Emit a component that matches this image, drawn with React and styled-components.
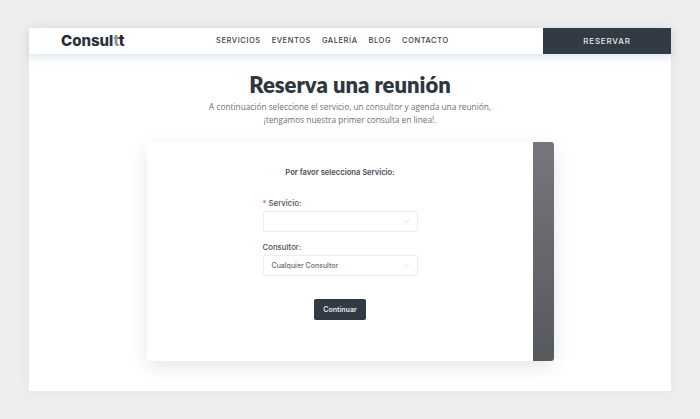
import React from "react";
import styled, { createGlobalStyle } from "styled-components";

const Global = createGlobalStyle`
  html, body { margin: 0; padding: 0; background: #eeeeee; }
  body { font-family: "Inter", "Liberation Sans", sans-serif; }
  * { box-sizing: border-box; }
`;

const Page = styled.div`
  width: 700px;
  height: 419px;
  padding: 28px 29px;
  overflow: hidden;
`;

const Frame = styled.div`
  width: 642px;
  height: 363px;
  background: #ffffff;
  box-shadow: 0 0 14px rgba(0, 0, 0, 0.05);
  display: flex;
  flex-direction: column;
  align-items: center;
`;

const Nav = styled.header`
  width: 100%;
  height: 25.5px;
  flex: none;
  display: flex;
  align-items: center;
  background: #ffffff;
  box-shadow: 0 3px 9px rgba(110, 155, 190, 0.26);
`;

const Logo = styled.div`
  width: 187px;
  padding-left: 32px;
  font: 800 15px/1 "Inter", sans-serif;
  color: #1f2730;
  flex: none;
`;

const Faded = styled.span`
  color: ${(p) => p.$color};
`;

const Menu = styled.nav`
  flex: 1;
  display: flex;
  gap: 11px;
  font: 500 7.5px/1 "Inter", sans-serif;
  letter-spacing: 0.56px;
  color: #3a4148;
`;

const Reserve = styled.button`
  width: 128px;
  height: 100%;
  flex: none;
  border: 0;
  background: #323a44;
  color: #e6e8ea;
  font: 500 8px/1 "Inter", sans-serif;
  letter-spacing: 0.8px;
`;

const Title = styled.h1`
  margin: 19px 0 0;
  font: 800 22px/24px "Lato", sans-serif;
  color: #30363e;
`;

const Lead = styled.p`
  margin: 3px 0 0;
  text-align: center;
  font: 400 8.3px/13px "Open Sans", sans-serif;
  color: #6a6f75;
`;

const Card = styled.section`
  width: 407px;
  height: 219px;
  margin-top: 16px;
  display: flex;
  border-radius: 3px;
  overflow: hidden;
  background: #fff;
  box-shadow: 0 6px 20px rgba(0, 0, 0, 0.1);
`;

const FormArea = styled.div`
  flex: 1;
  display: flex;
  flex-direction: column;
  align-items: center;
  padding: 25px 0 0 1px;
`;

const Side = styled.aside`
  width: 21px;
  flex: none;
  background: linear-gradient(180deg, #77777b 0%, #56595e 100%);
`;

const Heading = styled.div`
  font: 600 7.6px/11px "Inter", sans-serif;
  color: #484e54;
`;

const Fields = styled.div`
  width: 155px;
  margin-top: 19px;
  display: flex;
  flex-direction: column;
  gap: 9px;
`;

const Field = styled.div`
  display: flex;
  flex-direction: column;
  gap: 2px;
`;

const Label = styled.label`
  font: 500 7.8px/12px "Inter", sans-serif;
  color: #484e54;
`;

const Star = styled.span`
  color: #e2505a;
  margin-right: 2px;
`;

const Select = styled.div`
  height: 21px;
  padding: 0 7px 0 8px;
  border: 1px solid #eceef0;
  border-radius: 2px;
  display: flex;
  align-items: center;
  justify-content: space-between;
  font: 500 7px/1 "Inter", sans-serif;
  color: #676d73;
`;

const Submit = styled.button`
  width: 52px;
  height: 21px;
  margin-top: 23px;
  border: 0;
  border-radius: 2px;
  background: #323a44;
  color: #e8eaec;
  font: 600 7px/1 "Inter", sans-serif;
`;

const Chevron = () => (
  <svg width="7" height="5" viewBox="0 0 7 5" fill="none">
    <path d="M.8 1l2.7 2.6L6.2 1" stroke="#d8dbde" strokeWidth=".9" />
  </svg>
);

export default function App() {
  return (
    <Page>
      <Global />
      <Frame>
        <Nav>
          <Logo>
            C<Faded $color="#2b333c">onsul</Faded>
            <Faded $color="#8c9298">t</Faded>t
          </Logo>
          <Menu>
            <span>SERVICIOS</span>
            <span>EVENTOS</span>
            <span>GALERÍA</span>
            <span>BLOG</span>
            <span>CONTACTO</span>
          </Menu>
          <Reserve>RESERVAR</Reserve>
        </Nav>
        <Title>Reserva una reunión</Title>
        <Lead>
          A continuación seleccione el servicio, un consultor y agenda una reunión,
          <br />
          ¡tengamos nuestra primer consulta en linea!.
        </Lead>
        <Card>
          <FormArea>
            <Heading>Por favor selecciona Servicio:</Heading>
            <Fields>
              <Field>
                <Label>
                  <Star>*</Star>Servicio:
                </Label>
                <Select>
                  <span />
                  <Chevron />
                </Select>
              </Field>
              <Field>
                <Label>Consultor:</Label>
                <Select>
                  <span>Cualquier Consultor</span>
                  <Chevron />
                </Select>
              </Field>
            </Fields>
            <Submit>Continuar</Submit>
          </FormArea>
          <Side />
        </Card>
      </Frame>
    </Page>
  );
}
